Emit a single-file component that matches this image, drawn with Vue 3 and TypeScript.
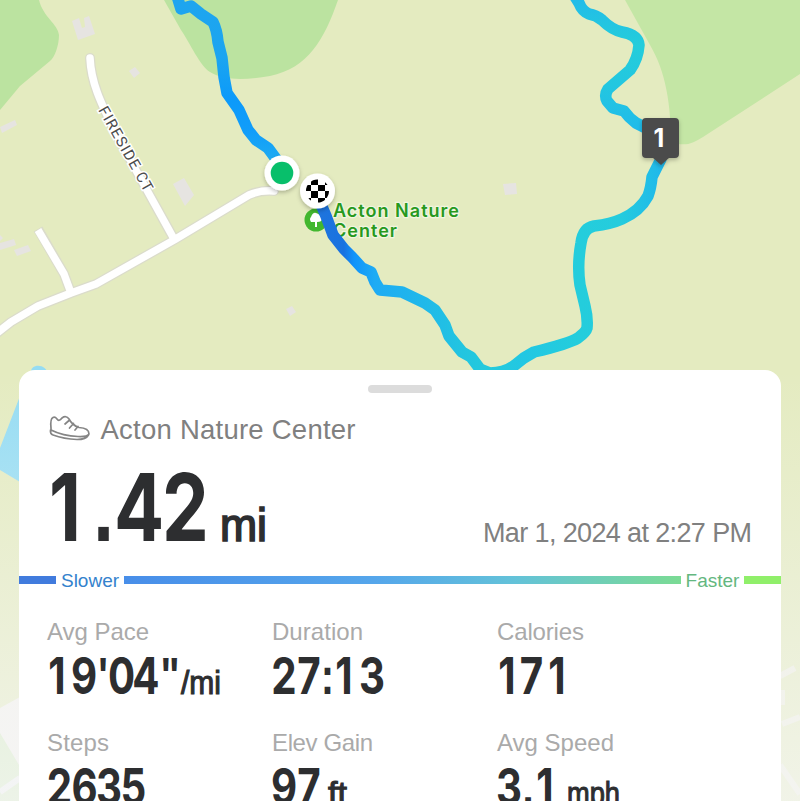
<script setup lang="ts">
interface Metric {
  label: string
  labelWidth: number
  value: string
  centers: number[]
  unit?: string
  unitX?: number
  unitWidth?: number
}

const metrics: Metric[] = [
  { label: 'Avg Pace', labelWidth: 102, value: '19\'04"', centers: [10, 37, 56, 74.5, 99, 123], unit: '/mi', unitX: 134, unitWidth: 40 },
  { label: 'Duration', labelWidth: 91, value: '27:13', centers: [12, 37, 55.5, 72, 100] },
  { label: 'Calories', labelWidth: 87, value: '171', centers: [10, 34.5, 60] },
  { label: 'Steps', labelWidth: 62, value: '2635', centers: [12.5, 37.5, 62, 86.5] },
  { label: 'Elev Gain', labelWidth: 101, value: '97', centers: [12, 37], unit: 'ft', unitX: 56, unitWidth: 19 },
  { label: 'Avg Speed', labelWidth: 117, value: '3.1', centers: [12, 31, 48], unit: 'mph', unitX: 70, unitWidth: 53 },
]

const title = 'Acton Nature Center'

// Digits are condensed horizontally; each glyph is centred on its own position.
const CONDENSE = 0.79
const glyphs = (value: string, centers: number[]) =>
  value.split('').map((char, i) => ({ char, x: centers[i] / CONDENSE, mark: /\D/.test(char) }))
</script>

<template>
  <main class="screen">
    <svg class="map" width="800" height="801" viewBox="0 0 800 801">
      <defs>
        <linearGradient id="fade" x1="0" y1="370" x2="0" y2="801" gradientUnits="userSpaceOnUse">
          <stop offset="0" stop-color="#f5f6f5" stop-opacity="0" />
          <stop offset="1" stop-color="#f5f6f5" stop-opacity=".75" />
        </linearGradient>
        <linearGradient id="start" x1="0" y1="0" x2="0" y2="165" gradientUnits="userSpaceOnUse">
          <stop offset="0" stop-color="#1ea5ef" />
          <stop offset=".35" stop-color="#1ba5f0" />
          <stop offset=".6" stop-color="#0c9afa" />
          <stop offset=".8" stop-color="#119dfa" />
          <stop offset="1" stop-color="#20aef0" />
        </linearGradient>
        <linearGradient id="north" x1="0" y1="0" x2="0" y2="130" gradientUnits="userSpaceOnUse">
          <stop offset="0" stop-color="#22bce8" />
          <stop offset=".35" stop-color="#24cddb" />
          <stop offset=".65" stop-color="#23c7e0" />
          <stop offset="1" stop-color="#20bbea" />
        </linearGradient>
        <linearGradient id="loop" x1="320" y1="0" x2="660" y2="0" gradientUnits="userSpaceOnUse">
          <stop offset="0" stop-color="#1e74dd" />
          <stop offset=".07" stop-color="#1972e0" />
          <stop offset=".1" stop-color="#1093fb" />
          <stop offset=".16" stop-color="#1eabf4" />
          <stop offset=".3" stop-color="#20b8ea" />
          <stop offset=".42" stop-color="#22c5e0" />
          <stop offset=".5" stop-color="#24cadc" />
          <stop offset=".6" stop-color="#22c7e3" />
          <stop offset=".76" stop-color="#24cddc" />
          <stop offset=".88" stop-color="#25ccdd" />
          <stop offset="1" stop-color="#20b9ea" />
        </linearGradient>
        <clipPath id="flag"><circle cx="317.500" cy="191" r="11.500" /></clipPath>
        <filter id="shadow" x="-30%" y="-30%" width="160%" height="160%">
          <feDropShadow dx="0" dy="2" stdDeviation="2" flood-opacity=".25" />
        </filter>
      </defs>

      <rect width="800" height="801" fill="#e4ebc0" />
      <path d="M0 0H39C43 17 58 24 59 35C59 45 55 57 50 61L20 86L0 110Z" fill="#bbe3a0" />
      <path d="M164 0H338C324 40 308 68 270 76C246 80 225 81 210 72C200 66 190 43 181 30Z" fill="#bbe3a0" />
      <path d="M625 0H800V74L703 137C691 144 688 146 671 143C671 105 666 72 650 45Z" fill="#c4e6a5" />
      <path d="M31 373C30 363 47 363 48 375ZM20 396L0 448V470L20 482Z" fill="#95dcf3" />
      <g fill="#e6e4e1">
        <path d="M72 21L79 18L82 28L85 27L84 18L89 16L95 34L78 40Z" />
        <path d="M129 71L135 67L140 73L134 78ZM0 127L15 120L17 125L2 133ZM173 184L184 178L194 195L185 206ZM503 184L516 183L517 194L505 195ZM286 309L292 306L296 312L290 316ZM0 243L14 239L16 245L0 250ZM14 250L28 245L31 251L17 256ZM0 235L3 238L0 241Z" />
      </g>
      <g fill="none" stroke-linejoin="round">
        <g stroke="#dbdccb" stroke-width="10">
          <path d="M90 58C91 84 102 105 117 136L174 239" stroke-linecap="round" /><path d="M38 229L64 274L71 293" />
          <path d="M-3 333L11 322L38 306L71 293L96 284L174 240L249 195Q260 190 274 191" stroke-linecap="round" />
        </g>
        <g stroke="#fff" stroke-width="7.500">
          <path d="M90 58C91 84 102 105 117 136L174 239" stroke-linecap="round" /><path d="M38 230L64 274L71 293" />
          <path d="M-3 333L11 322L38 306L71 293L96 284L174 240L249 195Q260 190 274 191" stroke-linecap="round" />
        </g>
      </g>
      <text class="street" transform="translate(98 110) rotate(60.500)" textLength="95">FIRESIDE CT</text>

      <circle cx="316" cy="220" r="11.500" fill="#42b72f" />
      <path d="M315 227V222H311Q309 219 311 217Q313 212 316 213Q320 214 322 219Q322 222 317 222V227Z" fill="#fff" />
      <text class="place" x="333" y="217" textLength="126">Acton Nature</text>
      <text class="place" x="333" y="237" textLength="64">Center</text>

      <g class="route">
        <path stroke="url(#start)" d="M177 -4L181 9L191 6L201 14L213 22Q217 30 218 42L222 58L224 77L227 93L239 110L248 130L256 140L268 148L279 163" />
        <path stroke="url(#north)" d="M574 -5L579 3Q582 11 589 14Q596 15 602 20Q612 30 622 32Q638 35 639 45Q638 59 630 70L608 89Q604 95 607 101L613 108L624 111Q629 118 636 123L650 130" />
        <path stroke="url(#loop)" d="M661 159L652 177Q651 188 648 196Q640 211 622 219Q611 224 594 226Q583 228 581 243Q577 265 580 285L585 306Q588 318 587 328Q586 332 578 338Q568 344 534 352Q524 357 515 365Q505 373 490 373L480 369L471 357L462 352L449 336L445 325L435 310L425 303L402 292L380 290L375 282L371 272L362 268L352 257L344 249L333 235L326 216L320 202" />
      </g>

      <g filter="url(#shadow)">
        <circle cx="282" cy="173" r="17.500" fill="#fff" /><circle cx="317.500" cy="191" r="17.500" fill="#fff" />
        <path d="M646 118H675Q679 118 679 122V154Q679 158 675 158H669L661 165L653 158H646Q642 158 642 154V122Q642 118 646 118Z" fill="#4c4c4c" />
      </g>
      <circle cx="282" cy="173" r="11.300" fill="#08bf6b" />
      <path clip-path="url(#flag)" fill="#000" d="M311 179H318V185H325V179H331V185H325V191H331V198H325V204H318V198H311V204H305V198H311V191H305V185H311ZM311 185V191H318V185ZM318 191V198H325V191Z" />
      <text class="mile" x="653.500" y="147">1</text>

      <path d="M0 708L20 697V770L0 740Z" fill="#f4f1ef" />
      <path d="M0 733L19 765V801H0Z" fill="#d3eac0" />
      <path d="M0 792L20 778" stroke="#eff0f3" stroke-width="6" />
      <path d="M780 676L795 668M782 690V705M782 724L800 717M780 765L800 794" fill="none" stroke="#f2f0f2" stroke-opacity=".65" stroke-width="6" />
      <rect y="370" width="800" height="431" fill="url(#fade)" />
    </svg>

    <section class="sheet">
      <div class="handle"></div>
      <header class="heading">
        <svg class="shoe" width="42" height="28" viewBox="0 0 42 28">
          <path d="M2 14Q1 5 4 3.500Q6 2.500 8 5Q10 8 13 4Q17 1 20 5Q23 11 30 13.500Q40 14 40 20Q38 23 29 22.500Q14 22 2 16ZM1.500 16Q1 20 4 21Q15 25 28 25.500Q37 25.500 39.500 21M16 10L20 6.500M20.500 14L24.500 9.500M26 16L29 12.500" />
        </svg>
        <svg class="title" width="270" height="36"><text x="0.500" y="25.500" textLength="255">{{ title }}</text></svg>
      </header>

      <div class="summary">
        <svg class="distance" width="230" height="80">
          <g :transform="`scale(${CONDENSE} 1)`">
            <text class="big" y="73"><tspan v-for="(g, i) in glyphs('1.42', [16, 54.5, 90, 136.5])" :key="i" :x="g.x" :class="{ mark: g.mark }">{{ g.char }}</tspan></text>
          </g>
          <text class="big-unit" x="171" y="73" textLength="47" lengthAdjust="spacingAndGlyphs">mi</text>
        </svg>
        <svg class="date" width="270" height="36"><text x="0" y="29.500" textLength="269">Mar 1, 2024 at 2:27 PM</text></svg>
      </div>

      <div class="pace">
        <i class="bar slow"></i><span class="slower">Slower</span><i class="bar mid"></i><span class="faster">Faster</span><i class="bar fast"></i>
      </div>

      <div class="metrics">
        <svg v-for="m in metrics" :key="m.label" class="metric" width="225" height="110.500">
          <text class="label" x="0" y="24" :textLength="m.labelWidth">{{ m.label }}</text>
          <g :transform="`scale(${CONDENSE} 1)`">
            <text class="value" y="78"><tspan v-for="(g, i) in glyphs(m.value, m.centers)" :key="i" :x="g.x" :class="{ mark: g.mark }">{{ g.char }}</tspan></text>
          </g>
          <text v-if="m.unit" class="unit" :x="m.unitX" y="78" :textLength="m.unitWidth" lengthAdjust="spacingAndGlyphs">{{ m.unit }}</text>
        </svg>
      </div>
    </section>
  </main>
</template>

<style>
body { overflow: hidden; }
</style>

<style scoped>
.screen {
  display: grid;
  width: 800px;
  height: 801px;
  overflow: hidden;
  font-family: "Liberation Sans", Arial, sans-serif;
}
.map, .sheet { grid-area: 1 / 1; }
.map { display: block; }
.street { font: 15px Roboto, sans-serif; fill: #4c4c4c; stroke: #fff; stroke-width: 3px; paint-order: stroke; }
.place { font-family: Inter, sans-serif; font-weight: 600; font-size: 18px; fill: #27991e; stroke: #f1f5df; stroke-width: 2.500px; paint-order: stroke; }
.route { fill: none; stroke-width: 11.500; stroke-linecap: round; stroke-linejoin: round; }
.mile { font-family: Inter, sans-serif; font-size: 25px; font-weight: bold; fill: #fff; }

.sheet {
  display: flex;
  flex-direction: column;
  box-sizing: border-box;
  width: 762px;
  height: 431px;
  margin: 370px 0 0 19px;
  overflow: hidden;
  background: #fff;
  border-radius: 16px 16px 0 0;
  z-index: 1;
}
.handle { flex: none; width: 64px; height: 8px; margin: 15px auto 0; border-radius: 4px; background: #dcdcdc; }
.heading { display: flex; flex: none; height: 36px; margin: 20px 0 0 30px; gap: 9px; }
.shoe { margin-top: 1px; fill: none; stroke: #858585; stroke-width: 1.700; stroke-linejoin: round; stroke-linecap: round; }
.title { font-size: 27.500px; fill: #808080; overflow: visible; }
.summary { display: flex; flex: none; justify-content: space-between; align-items: flex-end; height: 80px; margin: 19px 28px 0 30px; }
.distance { overflow: visible; fill: #2d2e30; }
.big, .value { font-family: Inter, sans-serif; font-weight: 700; text-anchor: middle; }
.big { font-size: 94px; }
.mark { font-family: "Liberation Sans", Arial, sans-serif; }
.big-unit { font-size: 46px; stroke: #2d2e30; stroke-width: 1.700px; }
.date { font-size: 27px; fill: #808080; overflow: visible; }
.pace { display: flex; flex: none; align-items: center; height: 24px; margin-top: 20px; font-size: 19px; line-height: 26px; }
.bar { height: 8px; }
.slow { width: 37px; background: #417bdd; }
.mid { flex: 1; background: linear-gradient(90deg, #488ee9, #55a6eb 45%, #63c2d9 70%, #7bdb94); }
.fast { width: 37px; background: #90ef6a; }
.slower { width: 68px; text-align: center; color: #3482cd; }
.faster { width: 63px; text-align: center; color: #64b77f; }
.slower, .faster { padding-top: 2px; }
.metrics { display: grid; flex: none; grid-template-columns: repeat(3, 225px); margin: 24px 0 0 28px; }
.metric { overflow: visible; }
.label { font-size: 24px; fill: #aaa; }
.value { font-size: 51px; fill: #2d2e30; }
.unit { font-size: 33px; fill: #2d2e30; stroke: #2d2e30; stroke-width: 1.100px; }
</style>
